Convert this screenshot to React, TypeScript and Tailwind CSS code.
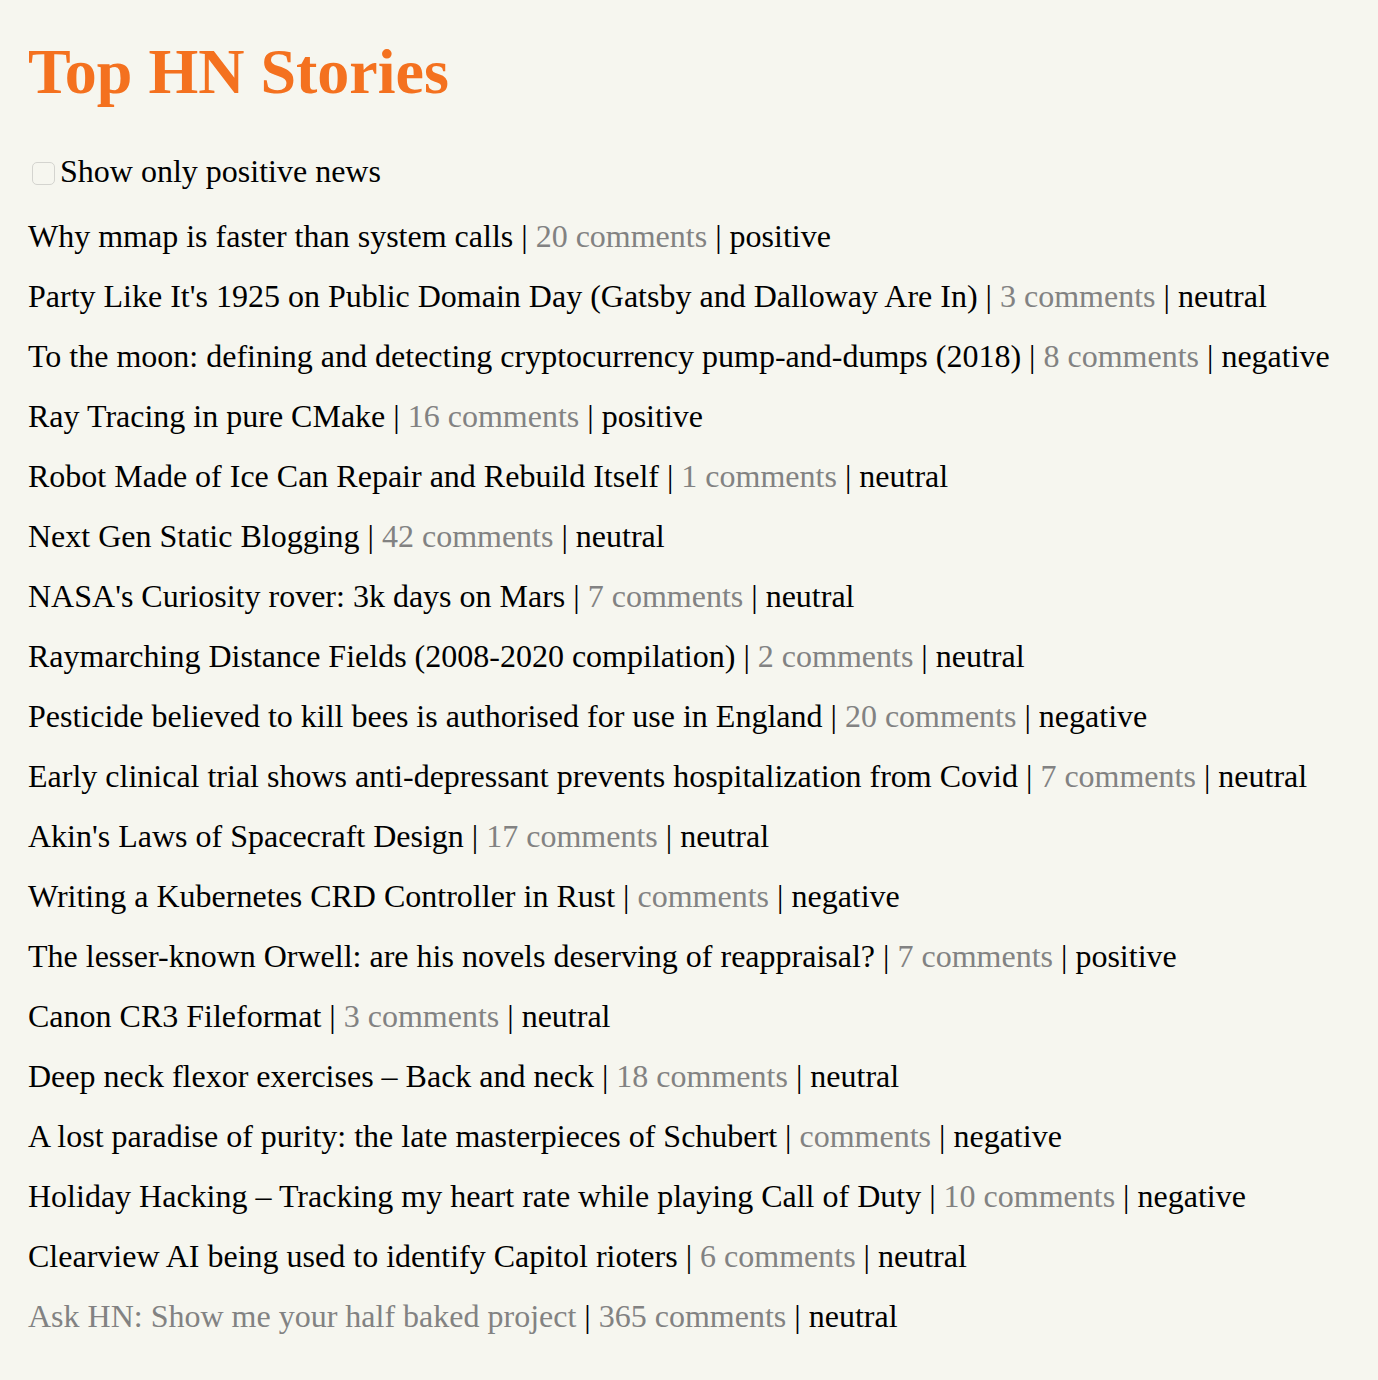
import { useState } from 'react'

type Story = {
  title: string
  comments: number | null
  sentiment: 'positive' | 'neutral' | 'negative'
  visited?: boolean
}

const stories: Story[] = [
  { title: 'Why mmap is faster than system calls', comments: 20, sentiment: 'positive' },
  { title: "Party Like It's 1925 on Public Domain Day (Gatsby and Dalloway Are In)", comments: 3, sentiment: 'neutral' },
  { title: 'To the moon: defining and detecting cryptocurrency pump-and-dumps (2018)', comments: 8, sentiment: 'negative' },
  { title: 'Ray Tracing in pure CMake', comments: 16, sentiment: 'positive' },
  { title: 'Robot Made of Ice Can Repair and Rebuild Itself', comments: 1, sentiment: 'neutral' },
  { title: 'Next Gen Static Blogging', comments: 42, sentiment: 'neutral' },
  { title: "NASA's Curiosity rover: 3k days on Mars", comments: 7, sentiment: 'neutral' },
  { title: 'Raymarching Distance Fields (2008-2020 compilation)', comments: 2, sentiment: 'neutral' },
  { title: 'Pesticide believed to kill bees is authorised for use in England', comments: 20, sentiment: 'negative' },
  { title: 'Early clinical trial shows anti-depressant prevents hospitalization from Covid', comments: 7, sentiment: 'neutral' },
  { title: "Akin's Laws of Spacecraft Design", comments: 17, sentiment: 'neutral' },
  { title: 'Writing a Kubernetes CRD Controller in Rust', comments: null, sentiment: 'negative' },
  { title: 'The lesser-known Orwell: are his novels deserving of reappraisal?', comments: 7, sentiment: 'positive' },
  { title: 'Canon CR3 Fileformat', comments: 3, sentiment: 'neutral' },
  { title: 'Deep neck flexor exercises – Back and neck', comments: 18, sentiment: 'neutral' },
  { title: 'A lost paradise of purity: the late masterpieces of Schubert', comments: null, sentiment: 'negative' },
  { title: 'Holiday Hacking – Tracking my heart rate while playing Call of Duty', comments: 10, sentiment: 'negative' },
  { title: 'Clearview AI being used to identify Capitol rioters', comments: 6, sentiment: 'neutral' },
  { title: 'Ask HN: Show me your half baked project', comments: 365, sentiment: 'neutral', visited: true },
]

export default function App() {
  const [onlyPositive, setOnlyPositive] = useState(false)
  const shown = onlyPositive ? stories.filter((s) => s.sentiment === 'positive') : stories

  return (
    <div className="min-h-[1380px] bg-[#f6f6ef] px-[28px] pt-[36px] pb-10 font-['Liberation_Serif',_'Times_New_Roman',_serif] text-black">
      <h1 className="text-[64px] leading-[72px] font-bold text-[#f4711f]">Top HN Stories</h1>

      <label className="mt-[43px] flex items-center text-[32px] leading-[40px]">
        <input
          type="checkbox"
          checked={onlyPositive}
          onChange={(e) => setOnlyPositive(e.target.checked)}
          className="mt-[4px] ml-[4px] mr-[5px] h-[23px] w-[23px] appearance-none rounded-[5px] border border-[#d4d4cf] bg-[#f6f6ef]"
        />
        Show only positive news
      </label>

      <div className="mt-[25px] flex flex-col gap-[20px] text-[32px] leading-[40px]">
        {shown.map((s) => (
          <div key={s.title}>
            <span className={s.visited ? 'text-[#828282]' : ''}>{s.title}</span>
            {' | '}
            <span className="text-[#828282]">{s.comments !== null ? `${s.comments} comments` : 'comments'}</span>
            {' | '}
            {s.sentiment}
          </div>
        ))}
      </div>
    </div>
  )
}
